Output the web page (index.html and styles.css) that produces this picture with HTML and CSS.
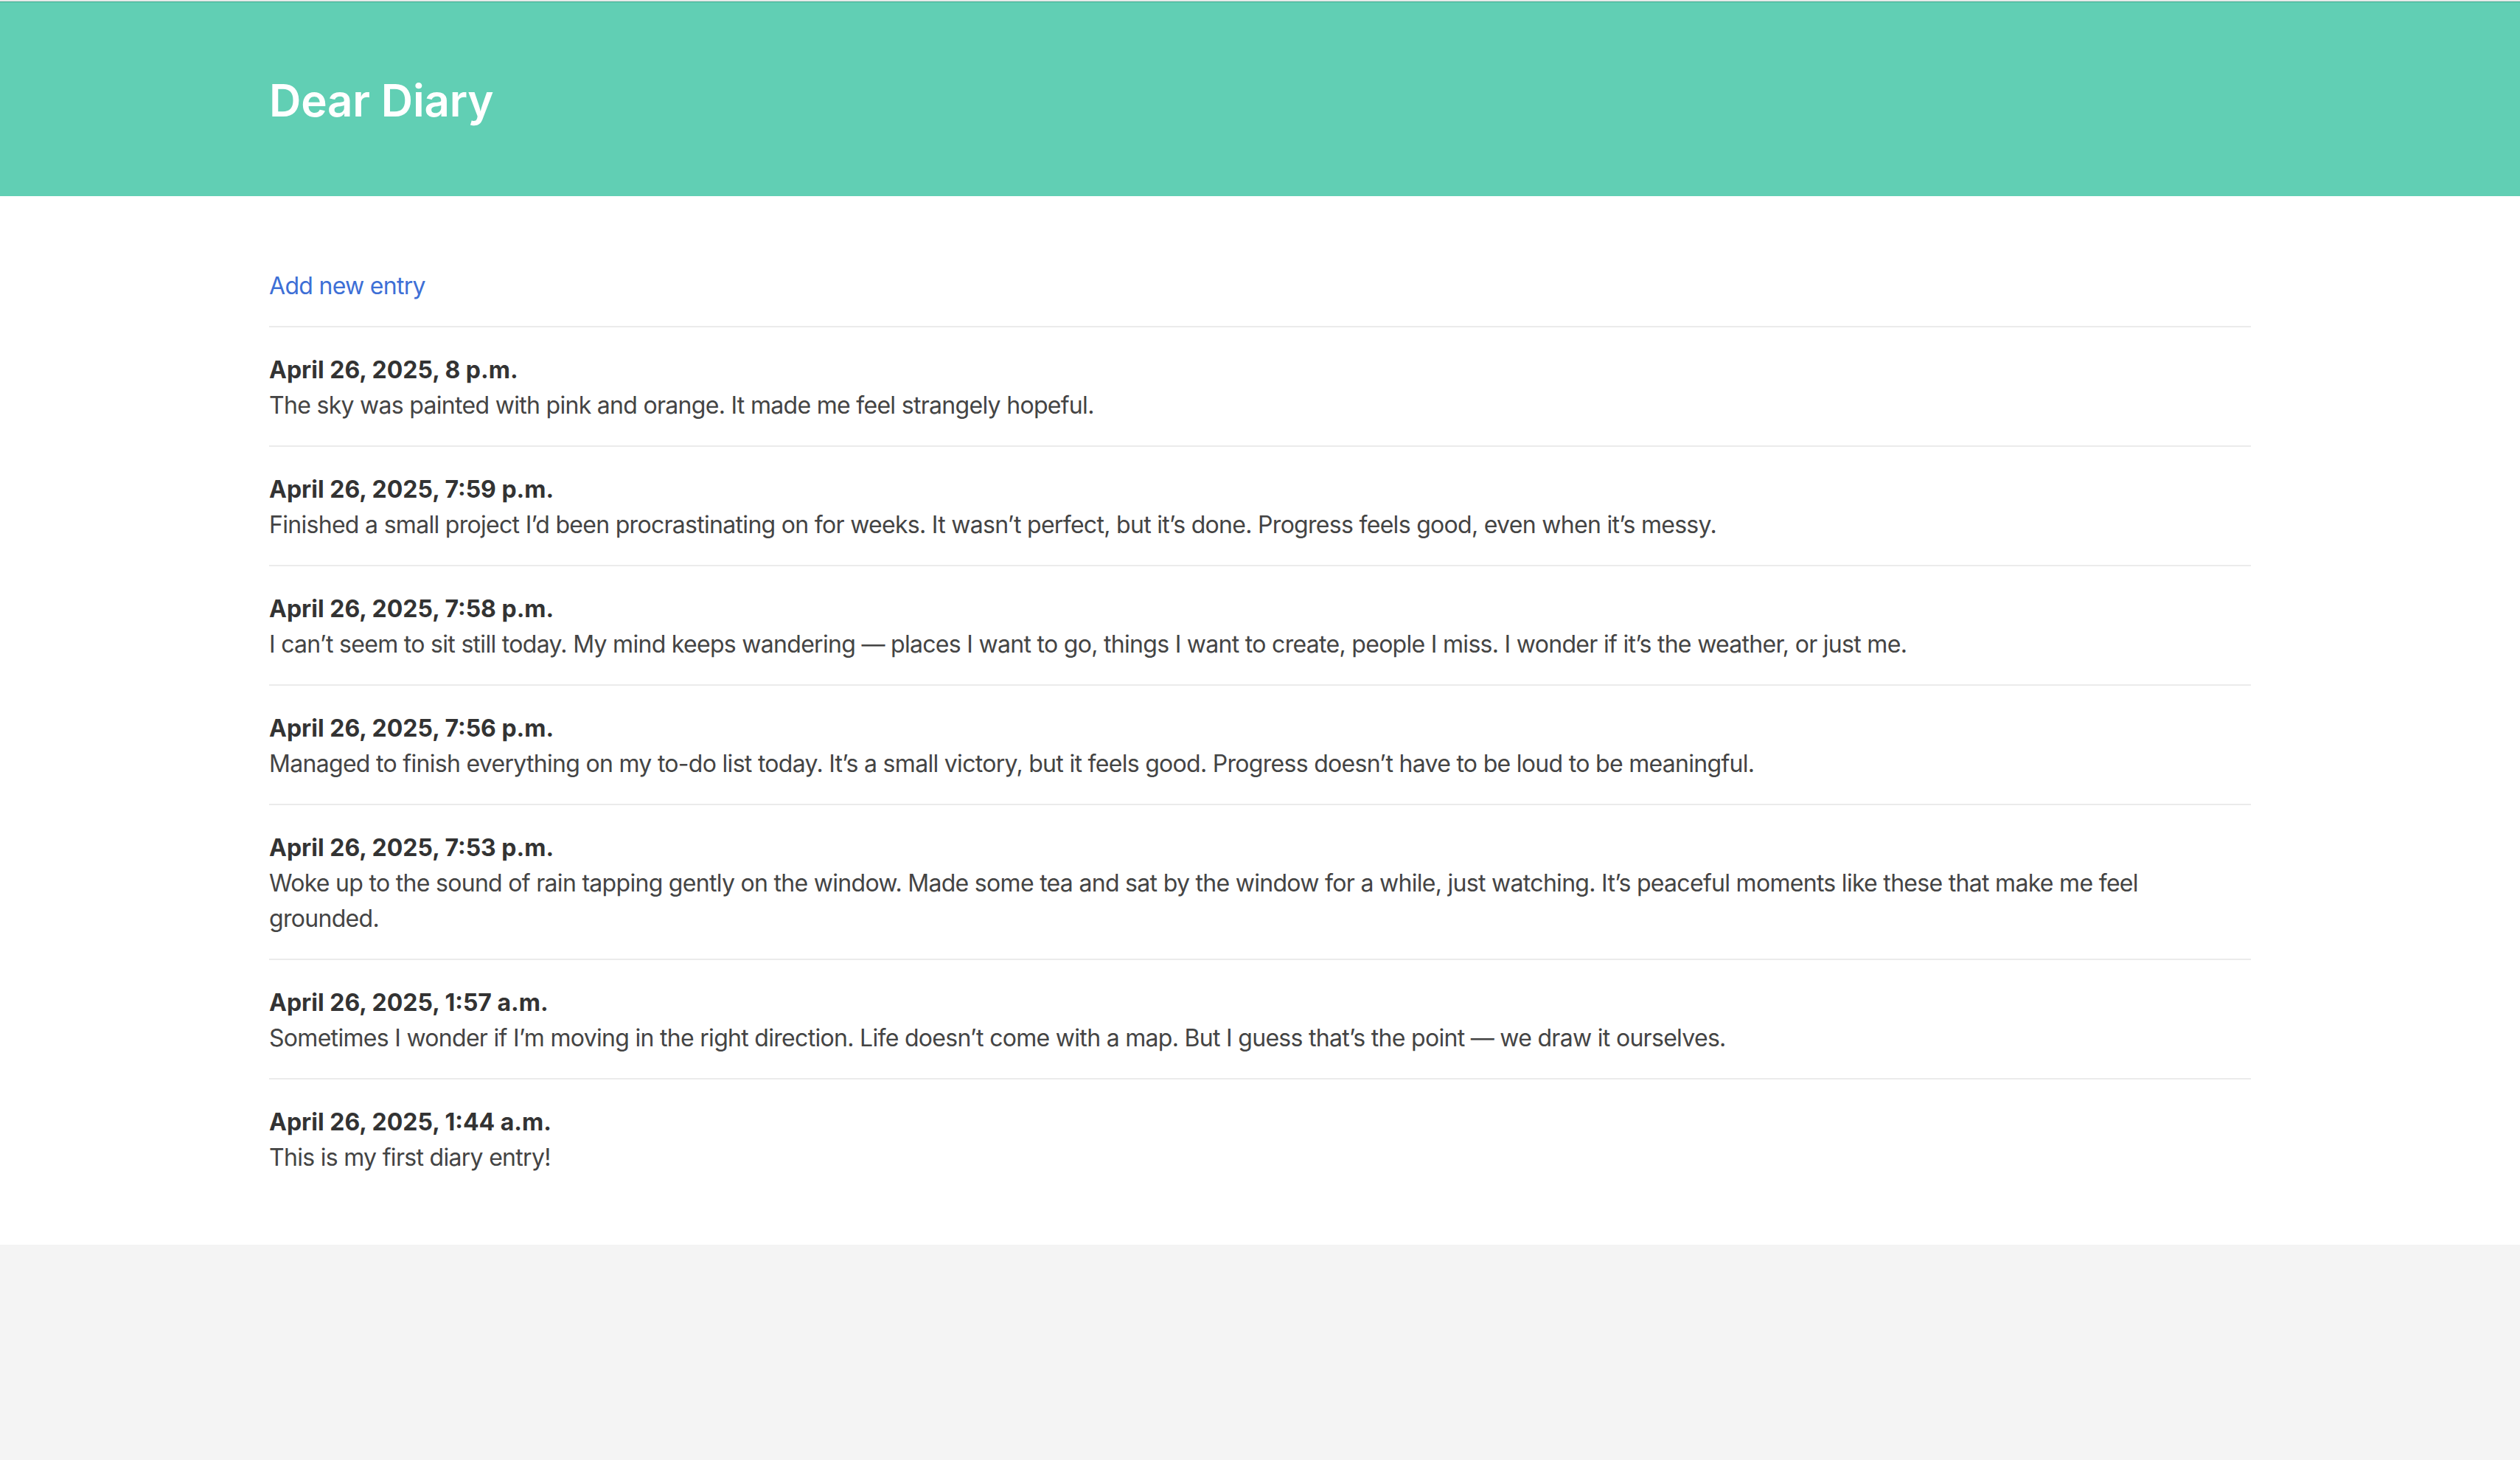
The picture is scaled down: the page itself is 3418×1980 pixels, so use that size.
FILE: index.html
```html
<!DOCTYPE html>
<html lang="en">
<head>
<meta charset="utf-8">
<title>Dear Diary</title>
<link rel="stylesheet" href="styles.css">
</head>
<body>
<header class="site-header">
  <div class="container">
    <h1 class="site-title">Dear Diary</h1>
  </div>
</header>
<main class="main">
  <div class="container">
    <a class="add-link" href="#">Add new entry</a>
    <ul class="entries">
      <li class="entry">
        <div class="entry-date">April 26, 2025, 8 p.m.</div>
        <p class="entry-text">The sky was painted with pink and orange. It made me feel strangely hopeful.</p>
      </li>
      <li class="entry">
        <div class="entry-date">April 26, 2025, 7:59 p.m.</div>
        <p class="entry-text">Finished a small project I’d been procrastinating on for weeks. It wasn’t perfect, but it’s done. Progress feels good, even when it’s messy.</p>
      </li>
      <li class="entry">
        <div class="entry-date">April 26, 2025, 7:58 p.m.</div>
        <p class="entry-text">I can’t seem to sit still today. My mind keeps wandering — places I want to go, things I want to create, people I miss. I wonder if it’s the weather, or just me.</p>
      </li>
      <li class="entry">
        <div class="entry-date">April 26, 2025, 7:56 p.m.</div>
        <p class="entry-text">Managed to finish everything on my to-do list today. It’s a small victory, but it feels good. Progress doesn’t have to be loud to be meaningful.</p>
      </li>
      <li class="entry">
        <div class="entry-date">April 26, 2025, 7:53 p.m.</div>
        <p class="entry-text">Woke up to the sound of rain tapping gently on the window. Made some tea and sat by the window for a while, just watching. It’s peaceful moments like these that make me feel grounded.</p>
      </li>
      <li class="entry">
        <div class="entry-date">April 26, 2025, 1:57 a.m.</div>
        <p class="entry-text">Sometimes I wonder if I’m moving in the right direction. Life doesn’t come with a map. But I guess that’s the point — we draw it ourselves.</p>
      </li>
      <li class="entry">
        <div class="entry-date">April 26, 2025, 1:44 a.m.</div>
        <p class="entry-text">This is my first diary entry!</p>
      </li>
    </ul>
  </div>
</main>
</body>
</html>
```
FILE: styles.css
```css
html, body {
  margin: 0;
  padding: 0;
}
body {
  background: #f4f4f4;
  font-family: Inter, "Noto Sans", "Liberation Sans", sans-serif;
  font-size: 32px;
  line-height: 48px;
  color: #444;
}
.container {
  width: 2688px;
  margin: 0 auto;
}
.site-header {
  background: #61cfb4;
  border-top: 2px solid #e6e9e8;
  box-shadow: inset 0 1px 0 #3fa88e;
  height: 264px;
  display: flex;
  align-items: center;
}
.site-header .container {
  padding-top: 4px;
}
.site-title {
  margin: 0;
  color: #fff;
  font-size: 60px;
  line-height: 80px;
  font-weight: 600;
  letter-spacing: -0.2px;
}
.main {
  background: #fff;
  padding: 96px 0 64px;
}
.add-link {
  display: block;
  color: #3d6fd6;
  text-decoration: none;
  letter-spacing: -0.7px;
  padding-top: 2px;
  padding-bottom: 30px;
  border-bottom: 2px solid #ebebeb;
}
.entries {
  list-style: none;
  margin: 0;
  padding: 0;
}
.entry {
  padding: 34px 0 30px;
  border-bottom: 2px solid #ebebeb;
}
.entry:last-child {
  border-bottom: none;
  padding-bottom: 30px;
}
.entry-date {
  font-weight: 700;
  color: #333;
}
.entry-text {
  margin: 0;
  color: #444;
  letter-spacing: -0.7px;
}
```
